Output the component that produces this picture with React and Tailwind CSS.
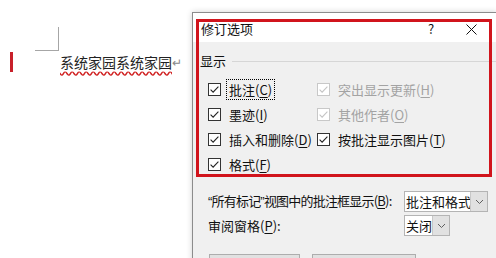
import React from 'react'

const font = { fontFamily: '"Microsoft YaHei", "Noto Sans CJK SC", "Noto Sans", sans-serif' }
const latin = { fontFamily: '"Liberation Sans", Arial, sans-serif' }

// mnemonic label, e.g. 批注(C) with the letter underlined
const Mn = ({ text, k }) => (
  <span>
    {text}(<span className="underline underline-offset-2">{k}</span>)
  </span>
)

const Check = ({ disabled }) => (
  <svg width="13" height="13" viewBox="0 0 13 13" className="shrink-0">
    <rect x="0.5" y="0.5" width="12" height="12" fill="white" stroke={disabled ? '#c8c8c8' : '#333333'} />
    <path d="M2.6 6.6 L5.1 9.1 L10.4 3.6" fill="none" stroke={disabled ? '#c4c4c4' : '#222222'} strokeWidth="1.1" />
  </svg>
)

const Option = ({ text, k, disabled, focus }) => (
  <div className="flex items-center h-[25px]">
    <Check disabled={disabled} />
    <div
      className={`ml-[5px] h-[21px] flex items-center px-[2px] leading-none ${focus ? 'border border-dotted border-black' : 'border border-transparent'} ${disabled ? 'text-[#a3a3a3]' : 'text-[#111]'}`}
    >
      <Mn text={text} k={k} />
    </div>
  </div>
)

const Select = ({ value, width }) => (
  <div className={`h-[21px] ${width} shrink-0 flex border border-[#b4b4b4] bg-white`}>
    <div className="flex-1 overflow-hidden whitespace-nowrap pl-[1px] leading-[19px] text-[#111]">{value}</div>
    <div className="w-[17px] shrink-0 bg-[#e1e1e1] border-l border-[#c8c8c8] flex items-center justify-center">
      <svg width="9" height="6" viewBox="0 0 9 6">
        <path d="M1 1 L4.5 4.5 L8 1" fill="none" stroke="#606060" strokeWidth="1" />
      </svg>
    </div>
  </div>
)

const Dialog = () => (
  <div className="absolute left-[192px] top-[12px] w-[305px] h-[260px] border border-[#8c8c8c] bg-[#f0f0f0] shadow-[0_0_6px_rgba(0,0,0,0.18)] text-[13px]">
    {/* title bar */}
    <div className="h-[29px] bg-white flex items-center pl-[8px] pt-[3px] text-[#111]">
      <span className="flex-1">修订选项</span>
      <span className="w-[20px] text-center mr-[25px]">?</span>
      <svg width="11" height="11" viewBox="0 0 11 11" className="mr-[19px]">
        <path d="M0.5 0.5 L10.5 10.5 M10.5 0.5 L0.5 10.5" stroke="#111" strokeWidth="1" />
      </svg>
    </div>

    {/* section header */}
    <div className="mt-[10px] h-[18px] flex items-center pl-[7px] text-[#111]">
      <span>显示</span>
      <div className="ml-[6px] flex-1 h-px bg-[#d6d6d6]" />
    </div>

    {/* options */}
    <div className="mt-[7px] pl-[15px] grid grid-cols-[109px_1fr]">
      <Option text="批注" k="C" focus />
      <Option text="突出显示更新" k="H" disabled />
      <Option text="墨迹" k="I" />
      <Option text="其他作者" k="O" disabled />
      <Option text="插入和删除" k="D" />
      <Option text="按批注显示图片" k="T" />
      <Option text="格式" k="F" />
    </div>

    {/* balloons / pane */}
    <div className="mt-[14px] pl-[15px] flex flex-col gap-[3px] text-[#111]">
      <div className="flex items-center">
        <span className="w-[196px] shrink-0 whitespace-nowrap tracking-[-0.8px]">
          <span style={latin}>“</span>所有标记<span style={latin}>”</span>视图中的批注框显示(<span className="underline underline-offset-2">B</span>):
        </span>
        <Select value="批注和格式" width="w-[84px]" />
      </div>
      <div className="flex items-center">
        <span className="w-[196px] shrink-0">
          审阅窗格(<span className="underline underline-offset-2">P</span>):
        </span>
        <Select value="关闭" width="w-[46px]" />
      </div>
    </div>

    {/* buttons (cut off) */}
    <div className="mt-[18px] pl-[16px] flex gap-[12px]">
      <div className="w-[91px] h-[24px] border border-[#adadad] bg-[#e1e1e1]" />
      <div className="w-[104px] h-[24px] border border-[#adadad] bg-[#e1e1e1]" />
    </div>

    {/* red highlight annotation */}
    <div className="absolute left-[3px] top-[6px] w-[296px] h-[158px] border-[3px] border-[#d1141c] pointer-events-none" />
  </div>
)

export default function App() {
  return (
    <div className="relative w-[496px] h-[258px] overflow-hidden bg-white" style={font}>
      {/* document page */}
      <div className="pt-[27px]">
        <div className="ml-[35px] w-[24px] h-[24px] border-r border-b border-[#a6a6a6]" />
        <div className="flex items-center mt-[1px]">
          <div className="ml-[10px] w-[3px] h-[20px] bg-[#c8202a]" />
          <span className="ml-[47px] text-[14px] leading-[20px] text-[#222] underline decoration-wavy decoration-[#d02020] underline-offset-[3px]">
            系统家园系统家园
          </span>
          <span className="text-[12px] text-[#888] leading-[20px]">↵</span>
        </div>
      </div>

      <Dialog />
    </div>
  )
}
